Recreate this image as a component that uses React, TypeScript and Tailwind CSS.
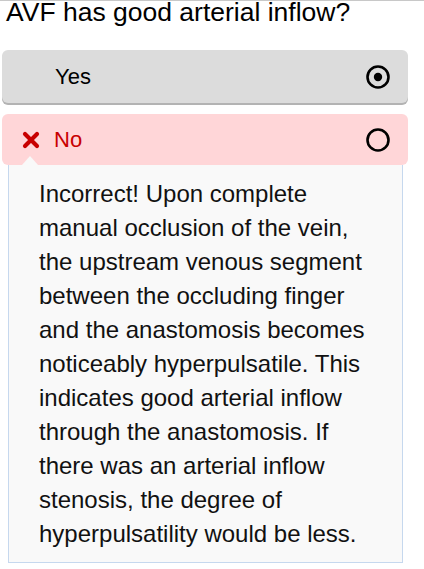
const FONT = { fontFamily: '"Liberation Sans", Arial, Helvetica, sans-serif' };

const FEEDBACK = [
  'Incorrect! Upon complete',
  'manual occlusion of the vein,',
  'the upstream venous segment',
  'between the occluding finger',
  'and the anastomosis becomes',
  'noticeably hyperpulsatile. This',
  'indicates good arterial inflow',
  'through the anastomosis. If',
  'there was an arterial inflow',
  'stenosis, the degree of',
  'hyperpulsatility would be less.',
];

function RadioIcon({ checked }: { checked: boolean }) {
  return (
    <svg width="26" height="26" viewBox="0 0 26 26" className="shrink-0">
      <circle cx="13" cy="13" r="10.5" fill="none" stroke="#000" strokeWidth="2.6" />
      {checked && <circle cx="13" cy="13" r="4.2" fill="#000" />}
    </svg>
  );
}

function CrossIcon() {
  return (
    <svg width="18" height="18" viewBox="0 0 18 18" className="shrink-0">
      <path d="M3 3 L15 15 M15 3 L3 15" stroke="#c80000" strokeWidth="4.2" strokeLinecap="round" />
    </svg>
  );
}

export default function App() {
  return (
    <div className="min-h-[569px] w-[424px] overflow-hidden border-t border-[#c8c8c8] bg-white" style={FONT}>
      <h2 className="-mt-[2px] ml-[6px] whitespace-nowrap text-[26.5px] leading-[26px] text-black">AVF has good arterial inflow?</h2>

      <div className="ml-[2px] mt-[25px] w-[406px]">
        {/* Selected option */}
        <button className="flex h-[53px] w-full items-center rounded-md bg-[#dcdcdc] pl-[53px] pr-[17px] text-left shadow-[0_2px_0_#b3b3b3]">
          <span className="flex-1 text-[22px] text-black">Yes</span>
          <RadioIcon checked />
        </button>

        {/* Wrong answer */}
        <div className="relative mt-[11px]">
          <button className="flex h-[51px] w-full items-center rounded-md bg-[#ffd6d8] pl-[20px] pr-[17px] text-left">
            <CrossIcon />
            <span className="ml-[14px] flex-1 text-[22px] text-[#c80000]">No</span>
            <RadioIcon checked={false} />
          </button>
          <span className="absolute left-[20px] top-[42px] h-0 w-0 border-x-[8px] border-b-[9px] border-x-transparent border-b-[#f9f9f9]" />
        </div>

        <div className="ml-[6px] w-[395px] border-x border-b border-[#c6d8ee] bg-[#f9f9f9] pb-[11px] pl-[30px] pr-[10px] pt-[12px]">
          <p className="text-[24px] leading-[34px] text-[#111]">
            {FEEDBACK.map((line) => (
              <span key={line} className="block whitespace-nowrap">{line}</span>
            ))}
          </p>
        </div>
      </div>
    </div>
  );
}
